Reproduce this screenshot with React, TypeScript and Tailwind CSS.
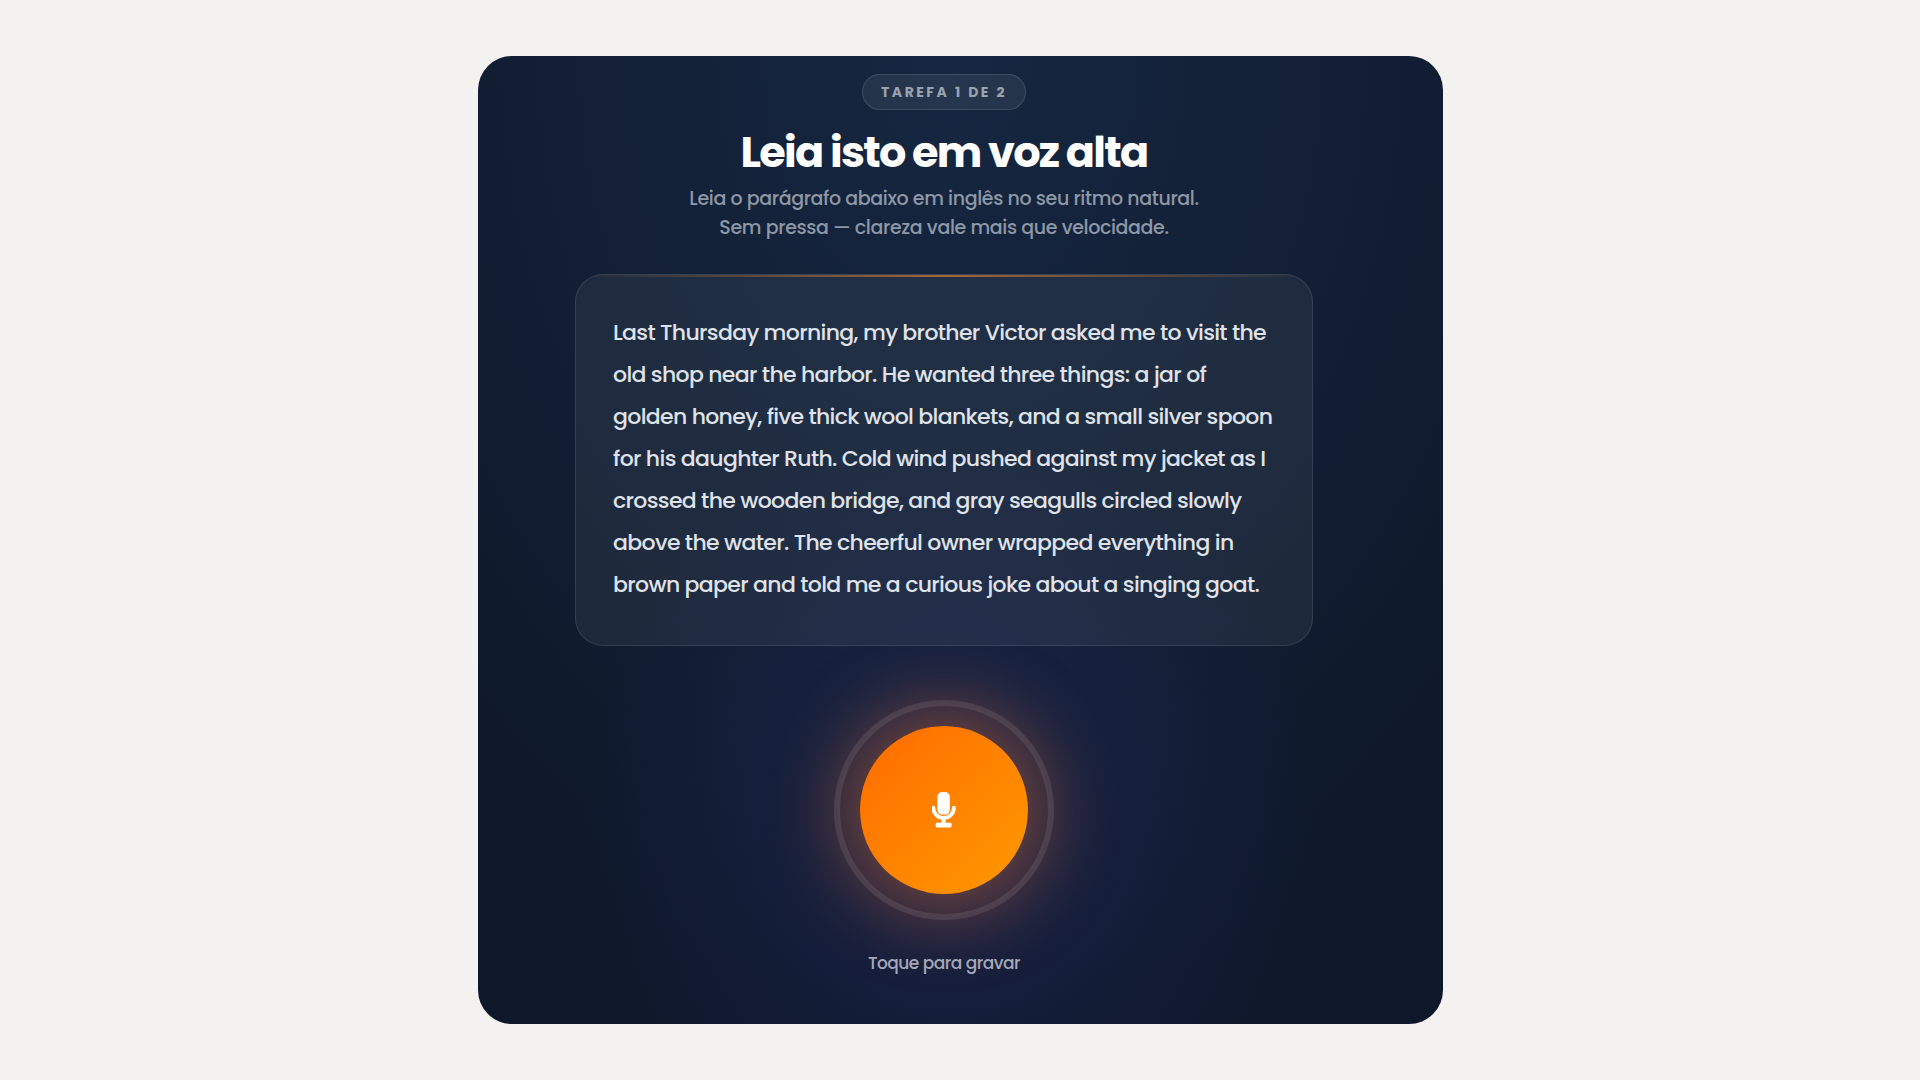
import { useState } from "react";

const TASK = {
  step: 1,
  total: 2,
  title: "Leia isto em voz alta",
  hint: ["Leia o parágrafo abaixo em inglês no seu ritmo natural.", "Sem pressa — clareza vale mais que velocidade."],
  passage:
    "Last Thursday morning, my brother Victor asked me to visit the old shop near the harbor. He wanted three things: a jar of golden honey, five thick wool blankets, and a small silver spoon for his daughter Ruth. Cold wind pushed against my jacket as I crossed the wooden bridge, and gray seagulls circled slowly above the water. The cheerful owner wrapped everything in brown paper and told me a curious joke about a singing goat.",
};

function MicIcon({ className }: { className?: string }) {
  return (
    <svg viewBox="0 0 24 36" fill="none" className={className} aria-hidden="true">
      <rect x="5.4" y="0" width="12.4" height="22.6" rx="4.8" fill="currentColor" />
      <path d="M1.4 15.6v.6c0 5.6 4.6 9.8 10.2 9.8s10.2-4.2 10.2-9.8v-.6" stroke="currentColor" strokeWidth="3.8" strokeLinecap="round" />
      <path d="M11.6 26v6" stroke="currentColor" strokeWidth="4" />
      <rect x="3.6" y="30.8" width="16" height="4.6" rx="1.4" fill="currentColor" />
    </svg>
  );
}

function StepBadge({ step, total }: { step: number; total: number }) {
  return (
    <span className="rounded-full border border-white/12 bg-white/7 px-[18px] py-2 text-sm leading-[18px] font-bold uppercase tracking-[0.18em] text-[#9aa2ae]">
      Tarefa {step} de {total}
    </span>
  );
}

function Passage({ text }: { text: string }) {
  return (
    <div className="relative w-full max-w-[738px] overflow-hidden rounded-[28px] border border-white/10 bg-white/6 pt-[37px] pr-9 pb-[39px] pl-[37px]">
      {/* accent line along the top edge */}
      <div className="absolute inset-x-0 top-0 h-0.5 bg-gradient-to-r from-transparent via-[#ff8a1f]/60 to-transparent" />
      <p className="text-[22px] leading-[42px] font-medium tracking-[-0.03em] text-[#dfe2e9]">{text}</p>
    </div>
  );
}

function RecordButton({ recording, onClick }: { recording: boolean; onClick: () => void }) {
  return (
    <div className="flex h-[220px] w-[220px] items-center justify-center rounded-full border-[6px] border-white/10">
      <button
        type="button"
        id="record"
        aria-pressed={recording}
        aria-labelledby="record-label"
        onClick={onClick}
        className="flex h-[168px] w-[168px] cursor-pointer items-center justify-center rounded-full bg-gradient-to-br from-[#ff6a00] to-[#ff9900] text-white shadow-[0_0_80px_16px_rgba(255,122,50,0.44)]"
      >
        <MicIcon className="h-9 w-6" />
      </button>
    </div>
  );
}

export default function App() {
  const [recording, setRecording] = useState(false);

  return (
    <div className="flex min-h-screen items-center justify-center bg-[#f3f2f0] font-[Poppins,Inter,sans-serif]">
      <main className="flex w-full max-w-[965px] flex-col items-center rounded-[34px] bg-[#0f182a] bg-[radial-gradient(ellipse_38%_42%_at_49%_80%,rgba(34,42,96,0.5),transparent),radial-gradient(ellipse_75%_100%_at_49%_0%,rgba(28,54,88,0.5),transparent)] pt-[18px] pr-16 pb-[49px] pl-8">
        <StepBadge step={TASK.step} total={TASK.total} />
        <h1 className="mt-[17px] text-[43px] leading-[50px] font-bold tracking-[-0.04em] text-white">{TASK.title}</h1>
        <p className="mt-[7px] text-center text-[19px] leading-[29px] font-medium tracking-[-0.02em] text-[#8e97a6]">
          {TASK.hint[0]}
          <br />
          {TASK.hint[1]}
        </p>

        <div className="mt-8 flex w-full justify-center">
          <Passage text={TASK.passage} />
        </div>

        <div className="mt-[54px]">
          <RecordButton recording={recording} onClick={() => setRecording(!recording)} />
        </div>
        <label id="record-label" htmlFor="record" className="mt-[31px] text-[17px] leading-6 font-medium tracking-[-0.03em] text-[#a5a8ba]">
          Toque para gravar
        </label>
      </main>
    </div>
  );
}
